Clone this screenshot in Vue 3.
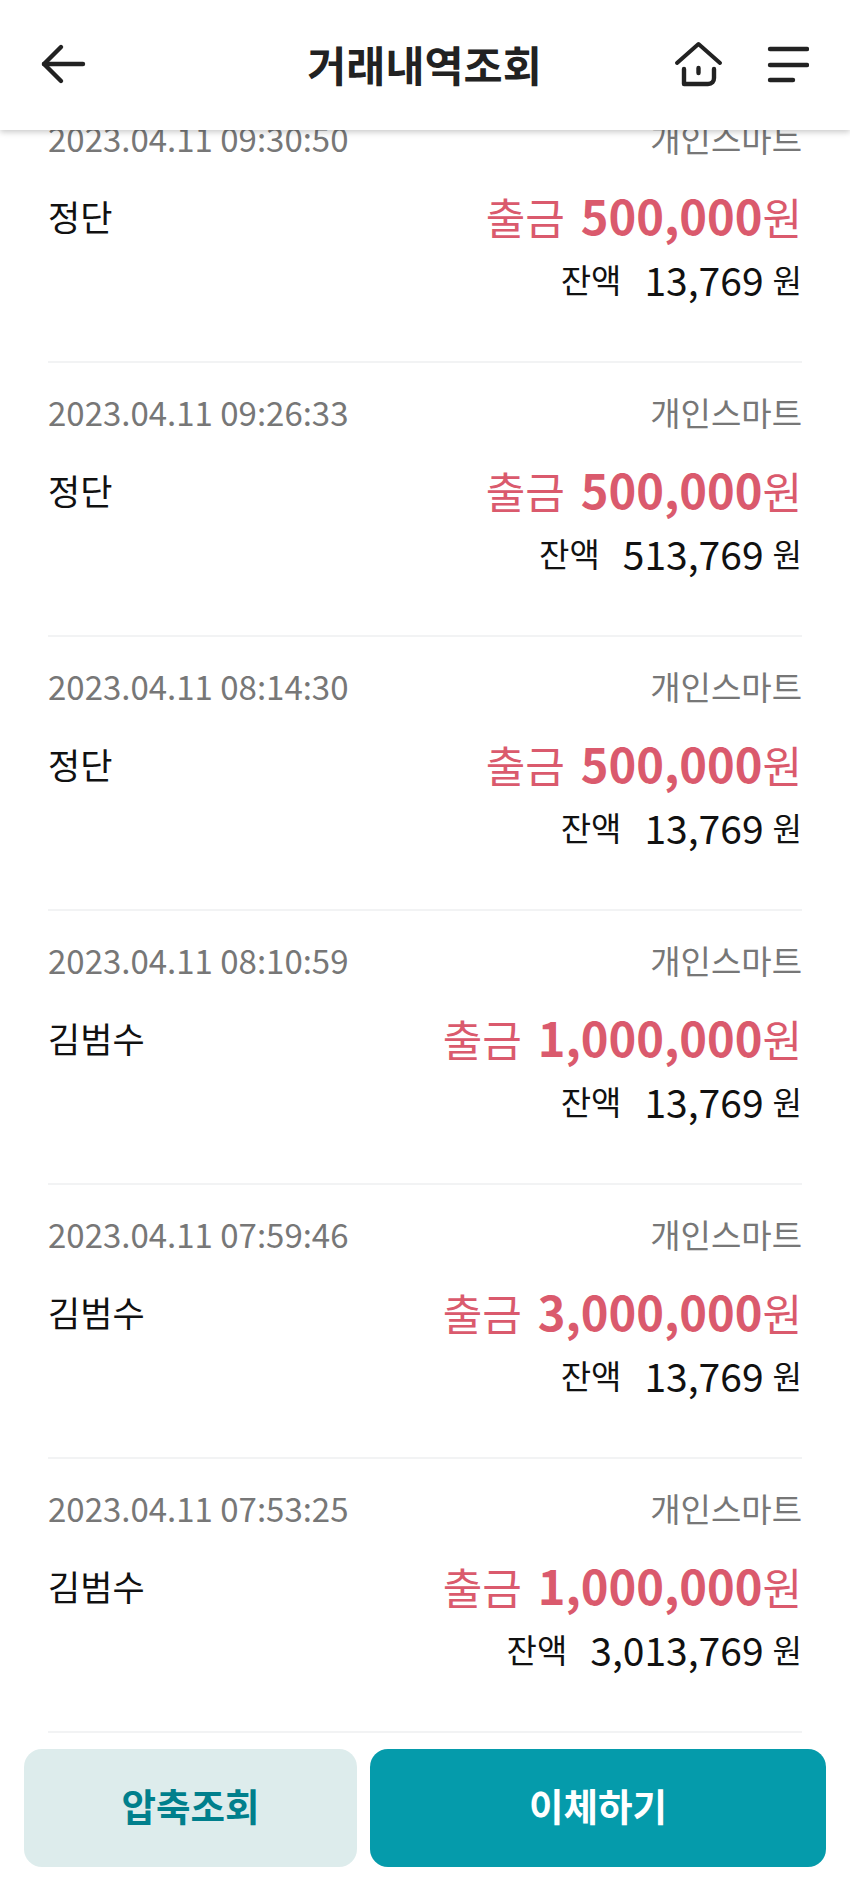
<template>
  <div class="screen">
    <header class="top-bar">
      <button class="icon-btn back" aria-label="뒤로">
        <svg width="56" height="52" viewBox="0 0 56 52" fill="none" stroke="#222" stroke-width="4.4" stroke-linecap="round" stroke-linejoin="round">
          <path d="M8 26H47" />
          <path d="M25 9L8 26 25 43" />
        </svg>
      </button>
      <h1 class="title">거래내역조회</h1>
      <div class="actions">
        <svg class="home" width="52" height="52" viewBox="0 0 52 52" fill="none" stroke="#222" stroke-linecap="round" stroke-linejoin="round">
          <path d="M4 25L25.500 6 47 25" stroke-width="4" />
          <path d="M11 31v15h24c4 0 6-2.500 6-6v-9" stroke-width="4.400" />
          <path d="M25.500 30v5" stroke-width="4.400" />
        </svg>
        <svg class="menu" width="44" height="40" viewBox="0 0 44 40" fill="none" stroke="#222" stroke-width="4.400" stroke-linecap="round">
          <path d="M5 5h37" />
          <path d="M5 21h37" />
          <path d="M5 36h23" />
        </svg>
      </div>
    </header>

    <main class="list">
      <section v-for="row in rows" :key="row.date" class="row">
        <div class="row-top">
          <span>{{ row.date }}</span>
          <span>개인스마트</span>
        </div>
        <div class="row-main">
          <span class="name">{{ row.name }}</span>
          <span class="amount">
            <span class="kind">출금</span>
            <b>{{ row.amount }}</b><span class="unit">원</span>
          </span>
        </div>
        <div class="row-balance">
          <span class="bal-label">잔액</span>
          <span class="bal-num">{{ row.balance }}</span>
          <span class="bal-unit">원</span>
        </div>
      </section>
    </main>

    <footer class="bottom">
      <button class="btn light">압축조회</button>
      <button class="btn primary">이체하기</button>
    </footer>
  </div>
</template>

<script setup>
const rows = [
  { date: '2023.04.11 09:30:50', name: '정단', amount: '500,000', balance: '13,769' },
  { date: '2023.04.11 09:26:33', name: '정단', amount: '500,000', balance: '513,769' },
  { date: '2023.04.11 08:14:30', name: '정단', amount: '500,000', balance: '13,769' },
  { date: '2023.04.11 08:10:59', name: '김범수', amount: '1,000,000', balance: '13,769' },
  { date: '2023.04.11 07:59:46', name: '김범수', amount: '3,000,000', balance: '13,769' },
  { date: '2023.04.11 07:53:25', name: '김범수', amount: '1,000,000', balance: '3,013,769' }
]
</script>

<style>
html,
body {
  margin: 0;
  background: #fff;
}
</style>

<style scoped>
.screen {
  width: 850px;
  height: 1890px;
  display: flex;
  flex-direction: column;
  overflow: hidden;
  background: #fff;
  font-family: "Noto Sans CJK KR", "Noto Sans", sans-serif;
}

.top-bar {
  position: relative;
  z-index: 2;
  flex: none;
  height: 130px;
  box-sizing: border-box;
  display: flex;
  align-items: center;
  justify-content: space-between;
  padding: 0 41px 2px 36px;
  background: #fff;
  box-shadow: 0 2px 6px rgba(0, 0, 0, 0.22);
}

.icon-btn {
  border: 0;
  padding: 0;
  background: none;
  display: flex;
}

.title {
  position: absolute;
  left: 0;
  right: 0;
  top: 36px;
  margin: 0;
  padding-right: 1px;
  text-align: center;
  font-size: 42.500px;
  line-height: 56px;
  font-weight: 700;
  color: #222;
}

.actions {
  display: flex;
  align-items: center;
  gap: 40px;
}

.list {
  flex: 1;
  min-height: 0;
  margin-top: -41px;
  padding: 0 48px;
}

.row {
  box-sizing: border-box;
  height: 274px;
  border-bottom: 2px solid #f2f3f4;
  padding-top: 26px;
}

.row-top {
  display: flex;
  justify-content: space-between;
  height: 46px;
  font-size: 33px;
  line-height: 46px;
  color: #777;
}

.row-main {
  display: flex;
  justify-content: space-between;
  margin-top: 24px;
  height: 60px;
  align-items: center;
}

.name {
  font-size: 35px;
  color: #111;
}

.amount {
  color: #da5a6d;
  font-size: 43px;
  line-height: 60px;
}

.amount b {
  font-size: 47px;
  font-weight: 700;
}

.kind {
  margin-right: 16px;
}

.row-balance {
  display: flex;
  justify-content: flex-end;
  align-items: center;
  margin-top: 9px;
  color: #111;
  height: 50px;
}

.bal-label {
  font-size: 33px;
  margin-right: 23px;
}

.bal-num {
  font-size: 39px;
}

.bal-unit {
  font-size: 32px;
  margin-left: 9px;
}

.bottom {
  position: absolute;
  left: 24px;
  top: 1749px;
  width: 802px;
  display: flex;
  gap: 13px;
}

.btn {
  height: 118px;
  padding: 0 0 7px;
  border: 0;
  border-radius: 18px;
  font-family: inherit;
  font-size: 37.500px;
  font-weight: 700;
}

.btn.light {
  width: 333px;
  background: #ddecec;
  color: #007f8c;
}

.btn.primary {
  flex: 1;
  background: #059bab;
  color: #fff;
}
</style>
